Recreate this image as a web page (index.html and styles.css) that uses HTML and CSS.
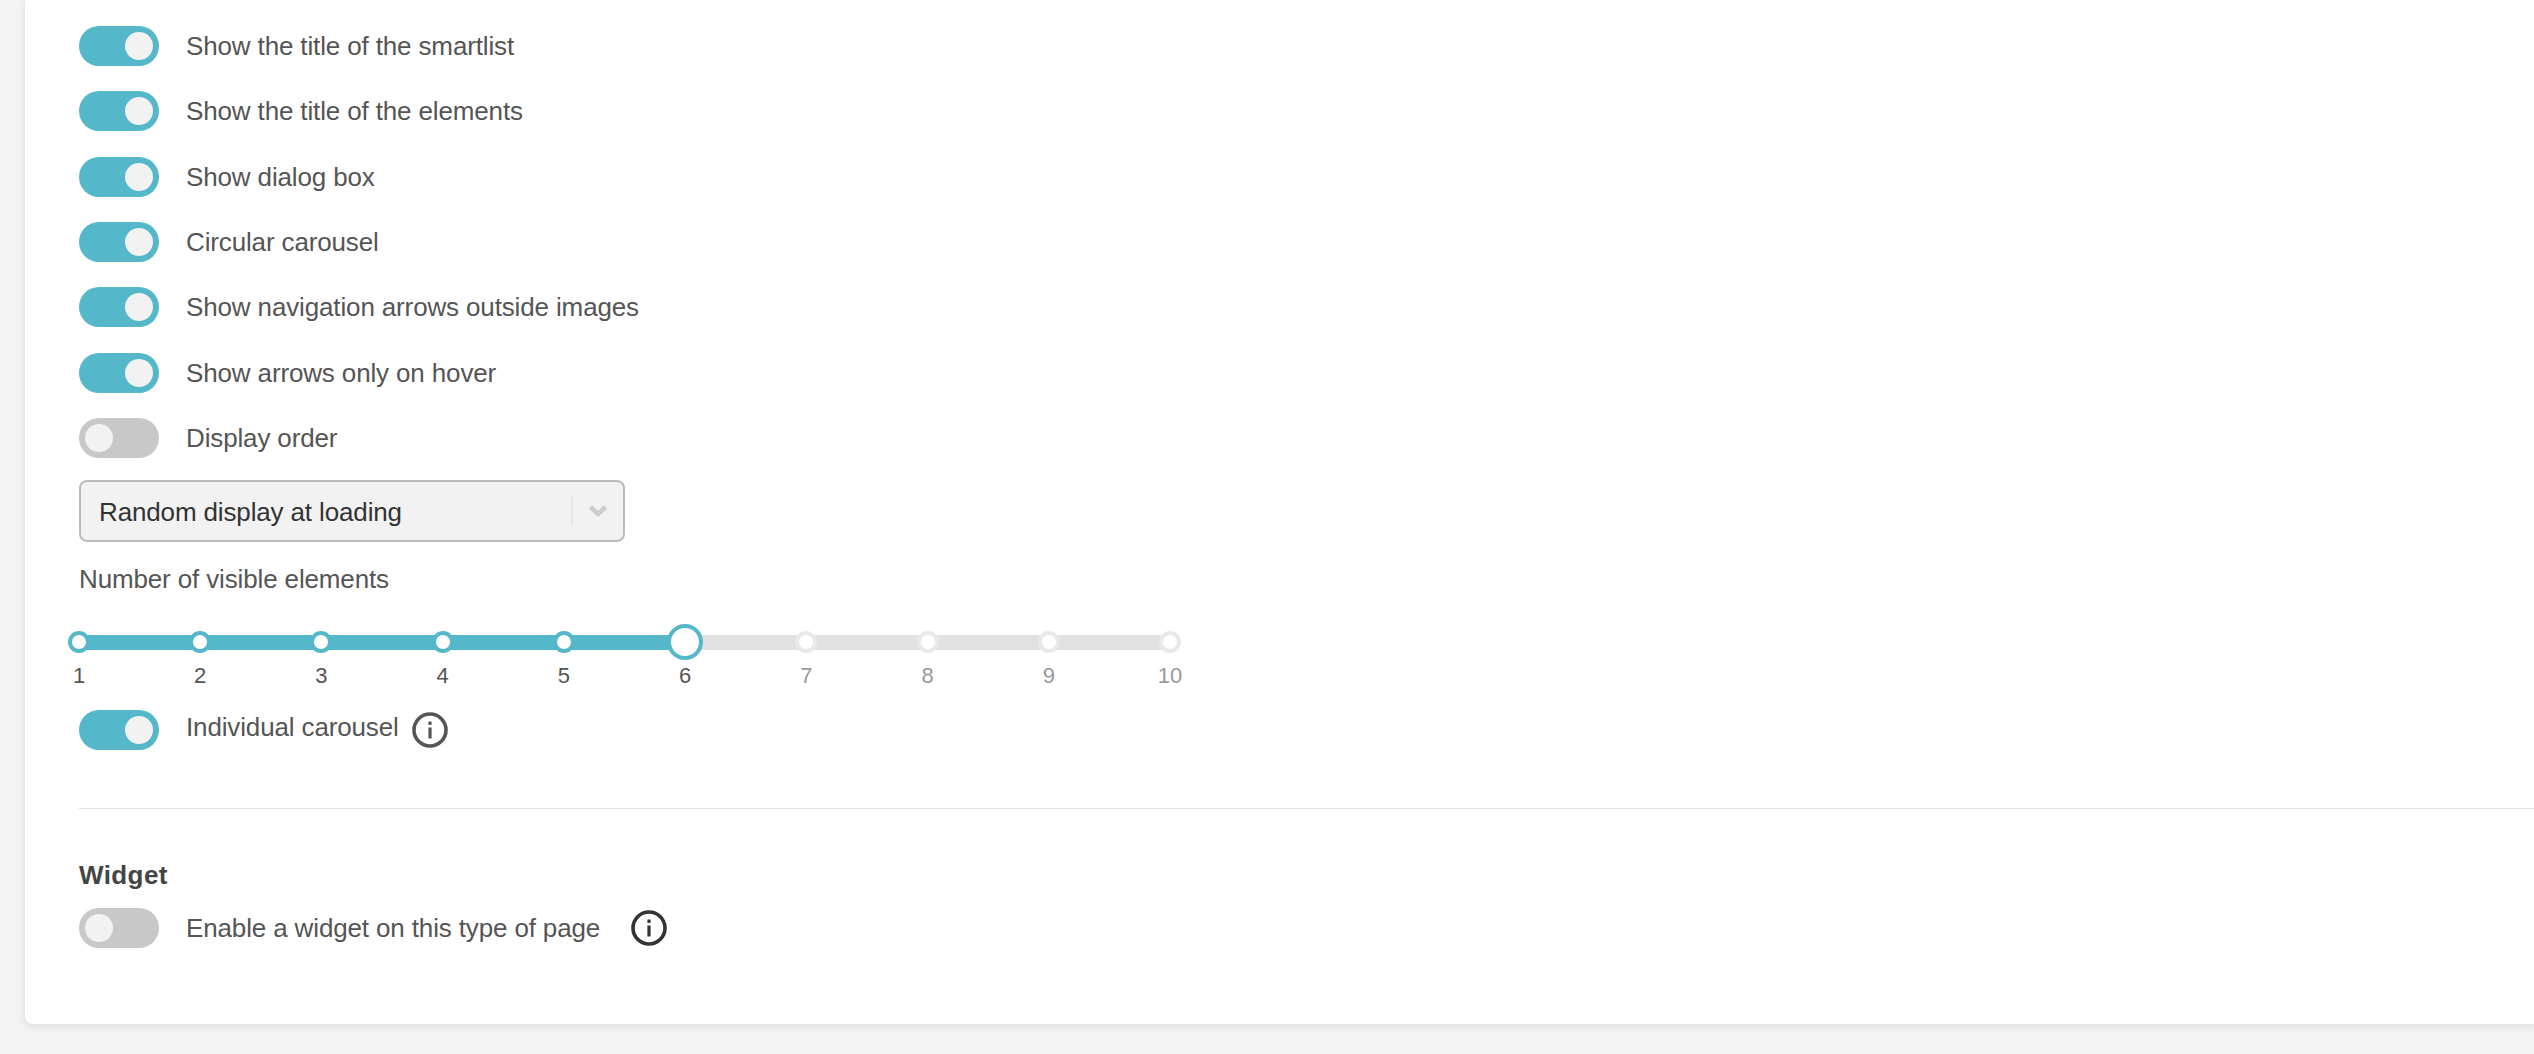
FILE: index.html
```html
<!DOCTYPE html>
<html lang="en">
<head>
    <meta charset="UTF-8">
    <title>Carousel settings</title>
    <link rel="stylesheet" href="styles.css">
</head>
<body>
    <div class="card">
        <div class="row"><span class="toggle on"></span><span class="label">Show the title of the smartlist</span></div>
        <div class="row"><span class="toggle on"></span><span class="label">Show the title of the elements</span></div>
        <div class="row"><span class="toggle on"></span><span class="label">Show dialog box</span></div>
        <div class="row"><span class="toggle on"></span><span class="label">Circular carousel</span></div>
        <div class="row"><span class="toggle on"></span><span class="label">Show navigation arrows outside images</span></div>
        <div class="row"><span class="toggle on"></span><span class="label">Show arrows only on hover</span></div>
        <div class="row row-last"><span class="toggle"></span><span class="label">Display order</span></div>

        <div class="select">
            <span class="select-value">Random display at loading</span>
            <span class="select-sep"></span>
            <svg class="select-arrow" width="24" height="14" viewBox="0 0 24 14"><path d="M4.5 3L12 10l7.5-7" fill="none" stroke="#ccc" stroke-width="4.5"/></svg>
        </div>

        <div class="slider-title">Number of visible elements</div>
        <div class="slider">
            <div class="track"><div class="track-fill" style="width: 55.56%"></div></div>
            <div class="stops">
                <div class="stop done"><span class="dot"></span><span class="num">1</span></div>
                <div class="stop done"><span class="dot"></span><span class="num">2</span></div>
                <div class="stop done"><span class="dot"></span><span class="num">3</span></div>
                <div class="stop done"><span class="dot"></span><span class="num">4</span></div>
                <div class="stop done"><span class="dot"></span><span class="num">5</span></div>
                <div class="stop done current"><span class="dot"></span><span class="num">6</span></div>
                <div class="stop"><span class="dot"></span><span class="num">7</span></div>
                <div class="stop"><span class="dot"></span><span class="num">8</span></div>
                <div class="stop"><span class="dot"></span><span class="num">9</span></div>
                <div class="stop"><span class="dot"></span><span class="num">10</span></div>
            </div>
        </div>

        <div class="row row-last">
            <span class="toggle on"></span>
            <span class="label label-raised">Individual carousel</span>
            <svg class="info info-grey" width="36" height="36" viewBox="0 0 36 36">
                <circle cx="18" cy="18" r="16" fill="none" stroke="currentColor" stroke-width="3.6"/>
                <rect x="16.4" y="15.5" width="3.2" height="11" fill="currentColor"/>
                <rect x="16.4" y="9.5" width="3.2" height="3.4" fill="currentColor"/>
            </svg>
        </div>

        <hr class="divider">

        <h2 class="section-title">Widget</h2>
        <div class="row row-last">
            <span class="toggle"></span>
            <span class="label">Enable a widget on this type of page</span>
            <svg class="info info-dark" width="36" height="36" viewBox="0 0 36 36">
                <circle cx="18" cy="18" r="16" fill="none" stroke="currentColor" stroke-width="3.6"/>
                <rect x="16.4" y="15.5" width="3.2" height="11" fill="currentColor"/>
                <rect x="16.4" y="9.5" width="3.2" height="3.4" fill="currentColor"/>
            </svg>
        </div>
    </div>
</body>
</html>
```

FILE: styles.css
```css
html, body {
    height: 100%;
}

body {
    font-family: "Liberation Sans", Arial, sans-serif;
    font-size: 26px;
    letter-spacing: -0.14px;
    color: #555;
    background-color: #f3f3f3;
    margin: 0;
    overflow: hidden;
}

.card {
    background: #fff;
    margin-left: 25px;
    padding: 26px 0 76px 54px;
    border-radius: 0 0 0 8px;
    box-shadow: 0 2px 8px rgba(0, 0, 0, 0.1);
}

.row {
    display: flex;
    align-items: center;
    height: 40px;
    margin-bottom: 25.33px;
}

.row-last {
    margin-bottom: 0;
}

.toggle {
    position: relative;
    flex: none;
    width: 80px;
    height: 40px;
    border-radius: 20px;
    background: #c8c8c8;
}

.toggle::after {
    content: "";
    position: absolute;
    left: 6px;
    top: 6px;
    width: 28px;
    height: 28px;
    border-radius: 50%;
    background: #f2f2f2;
}

.toggle.on {
    background: #54b7ca;
}

.toggle.on::after {
    left: 46px;
}

.label {
    margin-left: 27px;
    line-height: 30px;
}

.label-raised {
    margin-bottom: 5px;
}

.info {
    flex: none;
}

.info-grey {
    margin-left: 13px;
    color: #555;
}

.info-dark {
    margin-left: 31px;
    color: #333;
}

.select {
    display: flex;
    align-items: center;
    box-sizing: border-box;
    width: 546px;
    height: 62px;
    margin-top: 22px;
    padding: 3px 13px 0 18px;
    border: 2px solid #bbb;
    border-radius: 8px;
    background: #f2f2f2;
    color: #333;
}

.select-value {
    flex: 1;
}

.select-sep {
    width: 2px;
    height: 29px;
    margin: -3px 13px 0 0;
    background: #e6e6e6;
}

.select-arrow {
    margin-top: -3px;
}

.slider-title {
    margin-top: 22px;
    line-height: 30px;
}

.slider {
    position: relative;
    width: 1091px;
    height: 82px;
    margin-top: 34px;
}

.track {
    position: absolute;
    left: 0;
    right: 0;
    top: 7px;
    height: 15px;
    background: #e1e1e1;
}

.track-fill {
    height: 100%;
    background: #54b7ca;
}

.stops {
    display: flex;
    justify-content: space-between;
    position: relative;
}

.stop {
    display: flex;
    flex-direction: column;
    align-items: center;
    width: 0;
    position: relative;
}

.dot {
    flex: none;
    box-sizing: border-box;
    width: 22px;
    height: 22px;
    margin-top: 3px;
    border: 4px solid #e9e9e9;
    border-radius: 50%;
    background: #fff;
}

.stop.done .dot {
    border-color: #54b7ca;
}

.stop.current .dot {
    width: 36px;
    height: 36px;
    margin-top: -4px;
    margin-bottom: -7px;
}

.num {
    margin-top: 10px;
    font-size: 22px;
    line-height: 26px;
    letter-spacing: 0;
    color: #999;
}

.stop.done .num {
    color: #555;
}

.divider {
    height: 1px;
    margin: 58px 0 0;
    border: 0;
    background: #e2e2e2;
}

.section-title {
    margin: 50px 0 17px;
    font-size: 26px;
    line-height: 32px;
    font-weight: bold;
    letter-spacing: 0.4px;
    color: #444;
}
```
